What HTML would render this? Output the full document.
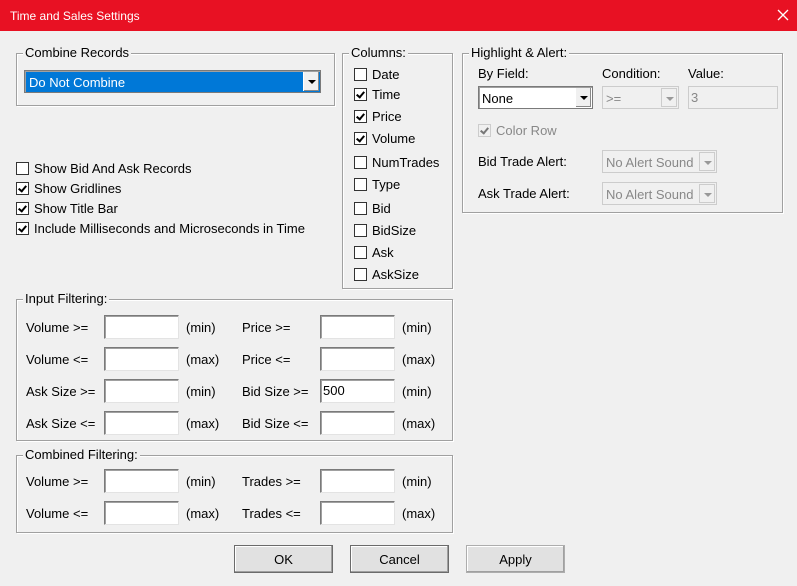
<!DOCTYPE html>
<html><head><meta charset="utf-8"><style>
*{box-sizing:border-box;margin:0;padding:0}
body{width:797px;height:586px;background:#f0f0f0;font-family:"Liberation Sans",sans-serif;font-size:13px;color:#000;position:relative;overflow:hidden}
.a{position:absolute;white-space:nowrap;line-height:16px;margin-top:1px}
.title{position:absolute;left:0;top:0;width:797px;height:31px;background:#e81123;color:#fff;font-size:12px}
.grp{position:absolute;border:1px solid #a0a0a0;box-shadow:inset 1px 1px 0 #fff,1px 1px 0 #fff}
.gl{position:absolute;background:#f0f0f0;padding:0 2px;line-height:14px;top:-8px}
.cb{position:absolute;width:13px;height:13px;border:1px solid #333;background:#fff}
.cb.on::after{content:"";position:absolute;left:3px;top:1px;width:3px;height:6px;border:solid #000;border-width:0 2px 2px 0;transform:rotate(40deg)}
.in{position:absolute;background:#fff;border:1px solid #7a7a7a;border-right-color:#e3e3e3;border-bottom-color:#e3e3e3;box-shadow:inset 1px 1px 0 #a0a0a0}
.btn{position:absolute;width:99px;height:28px;border:1px solid #6b6b6b;background:#e1e1e1;box-shadow:inset -1px -1px 0 #a0a0a0,inset 1px 1px 0 #fff;text-align:center;line-height:27px}
.sel{position:absolute;background:#fff;border:1px solid #7a7a7a;box-shadow:inset 1px 1px 0 #a0a0a0}
.arr{position:absolute;right:1px;top:1px;bottom:1px;width:16px;background:#f0f0f0;border-left:1px solid #fff;box-shadow:inset -1px -1px 0 #888}
.arr::after{content:"";position:absolute;left:4px;top:8px;border:4px solid transparent;border-top:4px solid #000;border-bottom:0}
.dis{color:#888}
.dis .arr::after{border-top-color:#999}
</style></head><body>
<div class="title"><span class="a" style="left:10px;top:7px">Time and Sales Settings</span>
<svg style="position:absolute;left:777px;top:9px" width="12" height="12"><path d="M1 1L11 11M11 1L1 11" stroke="#fff" stroke-width="1.3"/></svg></div>

<div class="grp" style="left:16px;top:53px;width:319px;height:53px"><span class="gl" style="left:6px">Combine Records</span></div>
<div class="sel" style="left:24px;top:70px;width:297px;height:23px;background:#0078d7"><span class="a" style="left:4px;top:3px;color:#fff">Do Not Combine</span><div class="arr" style="background:#f0f0f0"></div></div>

<div class="cb" style="left:16px;top:162px"></div><span class="a" style="left:34px;top:160px">Show Bid And Ask Records</span>
<div class="cb on" style="left:16px;top:182px"></div><span class="a" style="left:34px;top:180px">Show Gridlines</span>
<div class="cb on" style="left:16px;top:202px"></div><span class="a" style="left:34px;top:200px">Show Title Bar</span>
<div class="cb on" style="left:16px;top:222px"></div><span class="a" style="left:34px;top:220px">Include Milliseconds and Microseconds in Time</span>

<div class="grp" style="left:342px;top:53px;width:111px;height:236px"><span class="gl" style="left:6px">Columns:</span></div>
<div class="cb" style="left:354px;top:68px"></div><span class="a" style="left:372px;top:66px">Date</span>
<div class="cb on" style="left:354px;top:88px"></div><span class="a" style="left:372px;top:86px">Time</span>
<div class="cb on" style="left:354px;top:110px"></div><span class="a" style="left:372px;top:108px">Price</span>
<div class="cb on" style="left:354px;top:132px"></div><span class="a" style="left:372px;top:130px">Volume</span>
<div class="cb" style="left:354px;top:156px"></div><span class="a" style="left:372px;top:154px">NumTrades</span>
<div class="cb" style="left:354px;top:178px"></div><span class="a" style="left:372px;top:176px">Type</span>
<div class="cb" style="left:354px;top:202px"></div><span class="a" style="left:372px;top:200px">Bid</span>
<div class="cb" style="left:354px;top:224px"></div><span class="a" style="left:372px;top:222px">BidSize</span>
<div class="cb" style="left:354px;top:246px"></div><span class="a" style="left:372px;top:244px">Ask</span>
<div class="cb" style="left:354px;top:268px"></div><span class="a" style="left:372px;top:266px">AskSize</span>

<div class="grp" style="left:462px;top:53px;width:321px;height:160px"><span class="gl" style="left:6px">Highlight &amp; Alert:</span></div>
<span class="a" style="left:478px;top:65px">By Field:</span>
<span class="a" style="left:602px;top:65px">Condition:</span>
<span class="a" style="left:688px;top:65px">Value:</span>
<div class="sel" style="left:478px;top:86px;width:115px;height:23px"><span class="a" style="left:3px;top:3px">None</span><div class="arr"></div></div>
<div class="sel dis" style="left:602px;top:86px;width:77px;height:23px;background:#f0f0f0;border-color:#ccc;box-shadow:none"><span class="a" style="left:3px;top:3px">&gt;=</span><div class="arr" style="box-shadow:none;border:1px solid #ccc"></div></div>
<div class="in dis" style="left:688px;top:86px;width:90px;height:23px;background:#f0f0f0;border-color:#ccc;box-shadow:none"><span class="a" style="left:2px;top:2px">3</span></div>
<div class="cb on" style="left:478px;top:124px;border-color:#aaa;background:#f0f0f0;opacity:.5"></div><span class="a dis" style="left:496px;top:122px">Color Row</span>
<span class="a" style="left:478px;top:153px">Bid Trade Alert:</span>
<div class="sel dis" style="left:602px;top:150px;width:115px;height:23px;background:#f0f0f0;border-color:#ccc;box-shadow:none"><span class="a" style="left:3px;top:3px">No Alert Sound</span><div class="arr" style="box-shadow:none;border:1px solid #ccc"></div></div>
<span class="a" style="left:478px;top:185px">Ask Trade Alert:</span>
<div class="sel dis" style="left:602px;top:182px;width:115px;height:23px;background:#f0f0f0;border-color:#ccc;box-shadow:none"><span class="a" style="left:3px;top:3px">No Alert Sound</span><div class="arr" style="box-shadow:none;border:1px solid #ccc"></div></div>

<div class="grp" style="left:16px;top:299px;width:437px;height:142px"><span class="gl" style="left:6px">Input Filtering:</span></div>
<span class="a" style="left:26px;top:319px">Volume &gt;=</span><div class="in" style="left:104px;top:315px;width:75px;height:24px"></div><span class="a" style="left:186px;top:319px">(min)</span>
<span class="a" style="left:242px;top:319px">Price &gt;=</span><div class="in" style="left:320px;top:315px;width:75px;height:24px"></div><span class="a" style="left:402px;top:319px">(min)</span>
<span class="a" style="left:26px;top:351px">Volume &lt;=</span><div class="in" style="left:104px;top:347px;width:75px;height:24px"></div><span class="a" style="left:186px;top:351px">(max)</span>
<span class="a" style="left:242px;top:351px">Price &lt;=</span><div class="in" style="left:320px;top:347px;width:75px;height:24px"></div><span class="a" style="left:402px;top:351px">(max)</span>
<span class="a" style="left:26px;top:383px">Ask Size &gt;=</span><div class="in" style="left:104px;top:379px;width:75px;height:24px"></div><span class="a" style="left:186px;top:383px">(min)</span>
<span class="a" style="left:242px;top:383px">Bid Size &gt;=</span><div class="in" style="left:320px;top:379px;width:75px;height:24px"><span class="a" style="left:2px;top:2px">500</span></div><span class="a" style="left:402px;top:383px">(min)</span>
<span class="a" style="left:26px;top:415px">Ask Size &lt;=</span><div class="in" style="left:104px;top:411px;width:75px;height:24px"></div><span class="a" style="left:186px;top:415px">(max)</span>
<span class="a" style="left:242px;top:415px">Bid Size &lt;=</span><div class="in" style="left:320px;top:411px;width:75px;height:24px"></div><span class="a" style="left:402px;top:415px">(max)</span>

<div class="grp" style="left:16px;top:455px;width:437px;height:78px"><span class="gl" style="left:6px">Combined Filtering:</span></div>
<span class="a" style="left:26px;top:473px">Volume &gt;=</span><div class="in" style="left:104px;top:469px;width:75px;height:24px"></div><span class="a" style="left:186px;top:473px">(min)</span>
<span class="a" style="left:242px;top:473px">Trades &gt;=</span><div class="in" style="left:320px;top:469px;width:75px;height:24px"></div><span class="a" style="left:402px;top:473px">(min)</span>
<span class="a" style="left:26px;top:505px">Volume &lt;=</span><div class="in" style="left:104px;top:501px;width:75px;height:24px"></div><span class="a" style="left:186px;top:505px">(max)</span>
<span class="a" style="left:242px;top:505px">Trades &lt;=</span><div class="in" style="left:320px;top:501px;width:75px;height:24px"></div><span class="a" style="left:402px;top:505px">(max)</span>

<div class="btn" style="left:234px;top:545px">OK</div>
<div class="btn" style="left:350px;top:545px">Cancel</div>
<div class="btn" style="left:466px;top:545px;border-color:#adadad">Apply</div>
</body></html>
